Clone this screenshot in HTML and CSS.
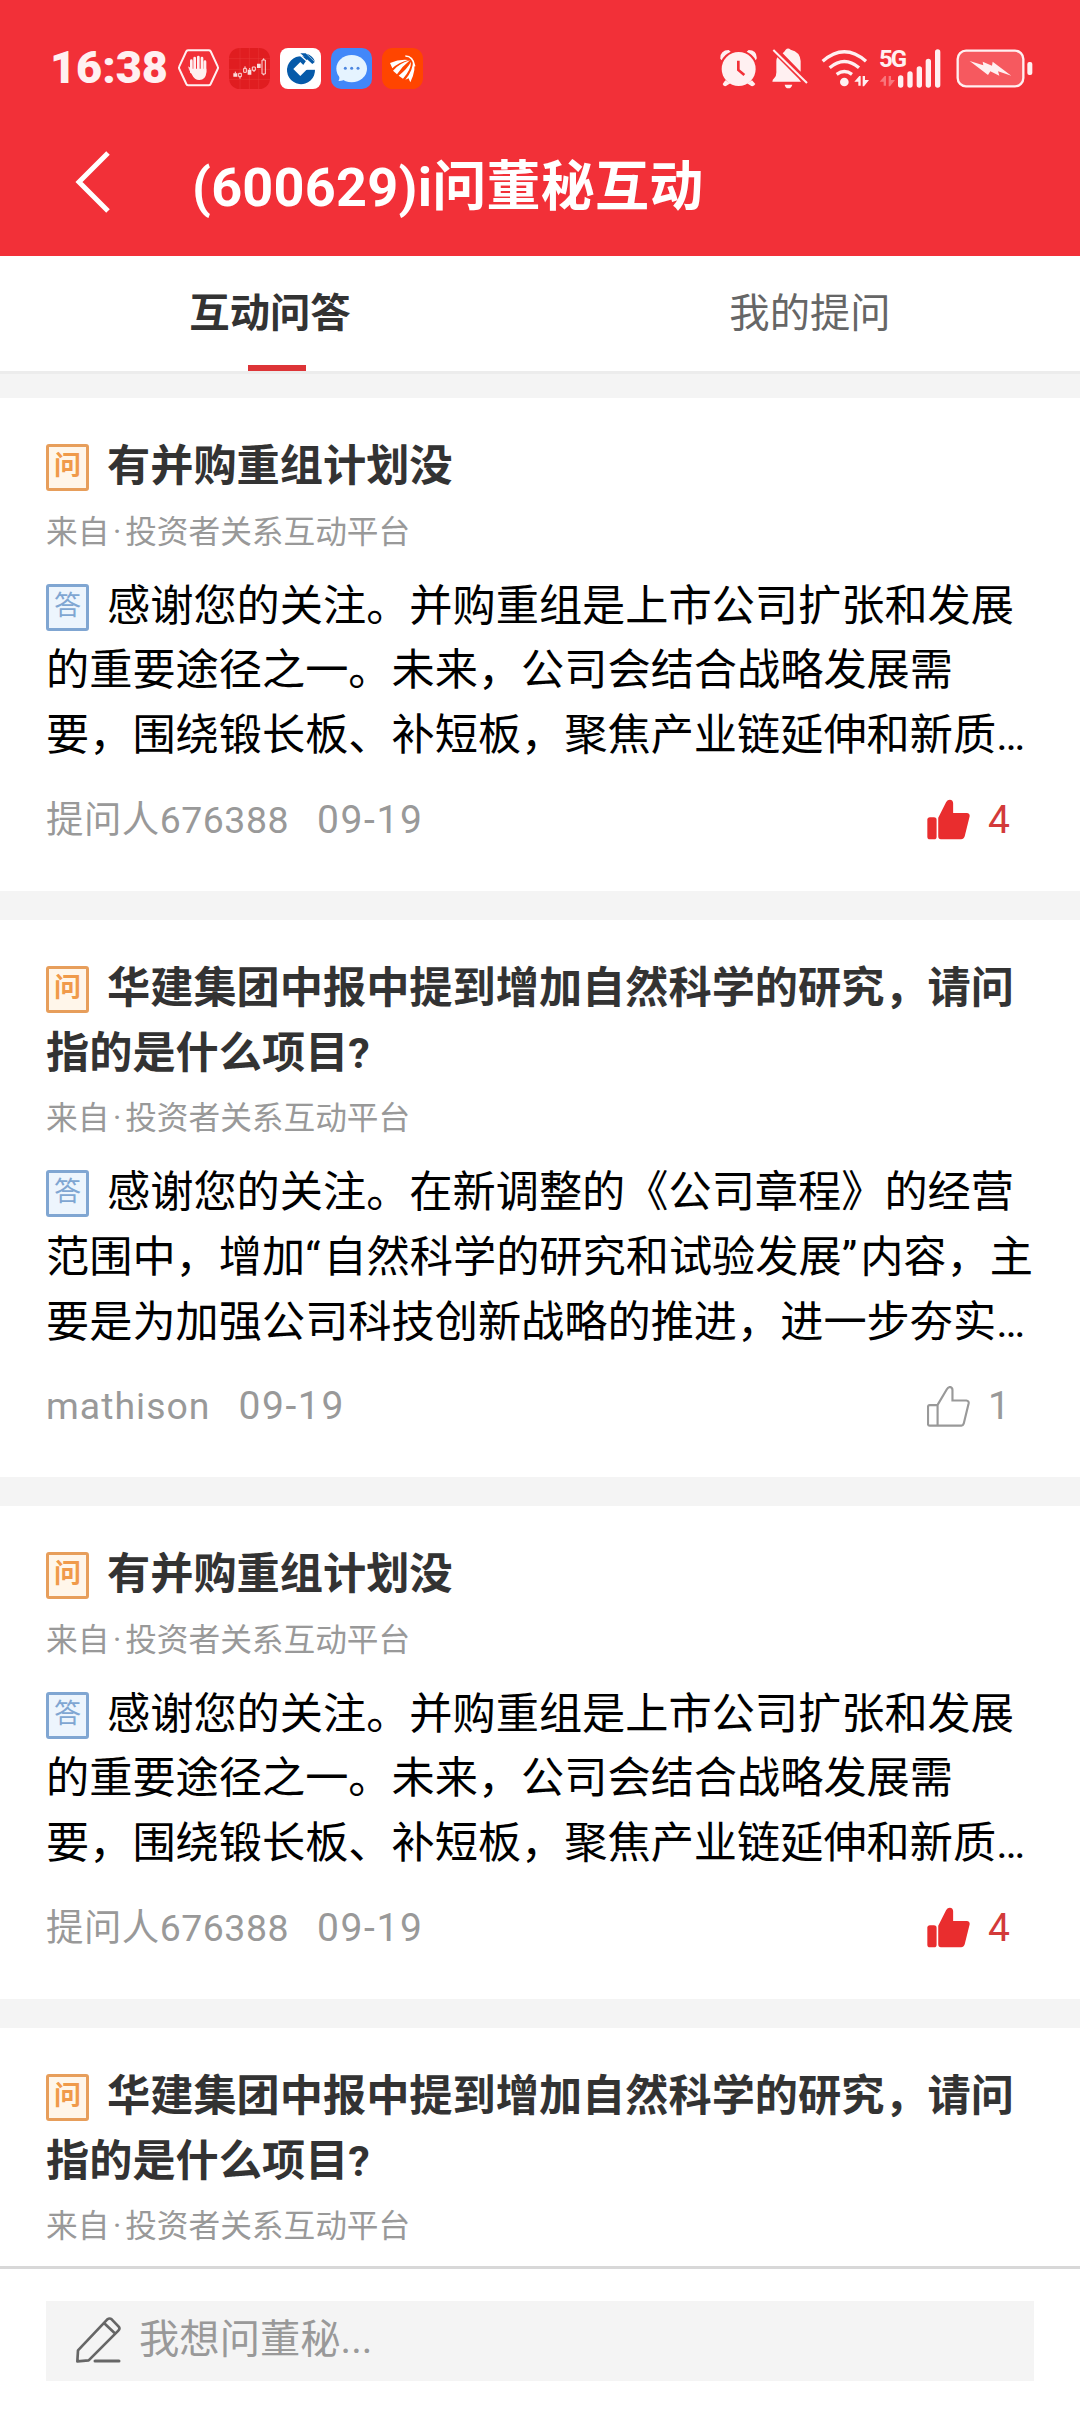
FILE: index.html
```html
<!DOCTYPE html>
<html lang="zh-CN">
<head>
  <title>i问董秘互动</title>
  <meta charset="UTF-8">
  <link rel="stylesheet" href="styles.css">
</head>
<body>
  <svg class="symbols">
    <symbol id="thumb-fill" viewBox="0 0 130 122">
      <rect x="1" y="54" width="28" height="67" rx="8"/>
      <path d="M34 56L58 8Q62 1 69 1Q79 2 79 12V41H120Q130 42 129 51L114 112Q111 121 103 121H42Q34 121 34 112Z"/>
    </symbol>
    <symbol id="thumb-line" viewBox="0 0 130 124">
      <path d="M32 57L60 10Q64 3 70 3Q77 5 77 12V44H119Q127 45 126 52L111 114Q109 120 104 120H8Q3 120 3 115V63Q3 58 8 58H32V120" fill="none" stroke="currentColor" stroke-width="6.5"/>
    </symbol>
  </svg>
  <div class="page">
    <div class="header">
      <div class="status-bar">
        <div class="status-left">
          <span class="clock">16:38</span>
          <svg width="41" height="38" viewBox="444 59 123 114">
            <path d="M475 63H536Q540 63 542 66L563 111Q565 115 563 119L542 164Q540 168 536 168H475Q471 168 469 164L448 119Q446 115 448 111L469 66Q471 63 475 63Z" fill="none" stroke="#fff0f1" stroke-width="6"/>
            <path d="M484 94V128M494 86V122M505 83V122M516 86V122M525 97V128" fill="none" stroke="#fff0f1" stroke-width="8" stroke-linecap="round"/>
            <path d="M480 122L475 114Q473 111 476 112L486 118H529V130Q527 151 508 152Q493 152 487 138L474 115Z" fill="#fff0f1"/>
          </svg>
          <svg width="41" height="41" viewBox="597 51 123 123">
            <rect x="597" y="51" width="123" height="123" rx="32" fill="#e01d20"/>
            <path d="M630 51V174M658 51V174M686 51V174M597 83H720M597 115H720M597 145H720" stroke="#ea3a3b" stroke-width="1.5"/>
            <path d="M610 127H622V137H610ZM653 116H664V131H653ZM681 98H692V111H681Z" fill="#fbdedd"/>
            <path d="M626 127H634V137H626ZM641 112H649V124H641ZM667 108H676V118H667ZM696 87H706V129H696ZM616 122V127M630 137V143M645 106V112M659 111V116M672 118V123M701 82V87M701 129V133" fill="none" stroke="#fbdedd" stroke-width="3"/>
          </svg>
          <svg width="41" height="41" viewBox="750 54 123 123">
            <rect x="750" y="54" width="123" height="123" rx="24" fill="#fff"/>
            <path d="M834 84A42 42 0 1 0 855 118H811Z" fill="#065aa9"/>
            <path d="M811 96L832 117L811 138L790 117Z" fill="#fff"/>
            <path d="M811 70H827L854 96L847 102Z" fill="#065aa9"/>
            <path d="M830 71Q849 77 855 95Z" fill="#065aa9"/>
            <path d="M809 74L846 107M826 117H860" stroke="#fff" stroke-width="4"/>
          </svg>
          <svg width="41" height="41" viewBox="903 54 123 123">
            <rect x="903" y="54" width="123" height="123" rx="30" fill="#4287f9"/>
            <ellipse cx="965" cy="116" rx="46" ry="41" fill="#e5f3ff"/>
            <path d="M927 134Q930 148 925 153Q938 154 944 148Z" fill="#e5f3ff"/>
            <circle cx="946" cy="115" r="4.5" fill="#4c86e0"/>
            <circle cx="965" cy="115" r="4.5" fill="#4c86e0"/>
            <circle cx="984" cy="115" r="4.5" fill="#4c86e0"/>
          </svg>
          <svg width="41" height="41" viewBox="1056 51 123 123">
            <rect x="1056" y="51" width="123" height="123" rx="32" fill="#ff4500"/>
            <path d="M1080 96Q1108 84 1135 87Q1106 94 1087 112ZM1089 119Q1108 97 1140 88Q1118 105 1101 130ZM1106 134Q1133 112 1143 92Q1144 114 1119 143ZM1126 146Q1150 118 1149 88Q1161 112 1141 154Q1138 149 1136 142Z" fill="#fff"/>
            <path d="M1126 75Q1149 75 1154 106" fill="none" stroke="#fff" stroke-width="5"/>
          </svg>
        </div>
        <div class="status-right">
          <svg width="37" height="38" viewBox="66 59 111 114">
            <circle cx="122" cy="119" r="51" fill="#fff0f1"/>
            <path d="M67 88Q66 63 92 62L98 67Q78 76 71 93ZM176 88Q178 63 152 62L146 67Q166 76 173 93ZM82 153L74 164Q76 172 84 170L97 162ZM162 153L172 164Q168 172 160 170L147 162Z" fill="#fff0f1"/>
            <path d="M121 94V122L139 137" fill="none" stroke="#f23038" stroke-width="8"/>
          </svg>
          <svg class="bell" width="36" height="41" viewBox="221 56 108 123">
            <path d="M262 61Q269 54 277 61Q305 67 307 95V127L253 72L259 66ZM234 95Q234 89 237 84L301 148L308 157H222Q222 151 228 146Q235 139 234 125ZM259 166H282Q279 177 270 177Q261 177 259 166Z" fill="#fff0f1"/>
            <path d="M225 62L326 161" stroke="#fff0f1" stroke-width="6"/>
          </svg>
          <svg class="wifi" width="48" height="38" viewBox="368 54 144 114">
            <path d="M373 91Q438 34 503 91M394 110Q438 73 482 110M415 130Q438 113 461 130" fill="none" stroke="#fff0f1" stroke-width="10"/>
            <circle cx="438" cy="153" r="13" fill="#fff0f1"/>
            <path d="M468 152L483 135H487V164H480V152ZM512 147L497 166H493V135H500V147Z" fill="#fff0f1"/>
          </svg>
          <div class="signal">
            <span class="net">5G</span>
            <svg width="62" height="39" viewBox="542 54 186 117">
              <path d="M544 152L559 135H563V164H556V152ZM590 147L575 166H571V135H578V147Z" fill="#f8767c"/>
              <path d="M607 141V162M635 129V162M663 114V162M690 91V162M718 63V162" stroke="#fff0f1" stroke-width="16" stroke-linecap="round"/>
            </svg>
          </div>
          <svg class="battery" width="77" height="39" viewBox="770 54 231 117">
            <rect x="775" y="59" width="197" height="107" rx="25" fill="#f6595f" stroke="#fff0f1" stroke-width="7"/>
            <path d="M811 90L852 103L850 92L878 104L880 92L936 134L896 121L900 134L873 121L866 132Z" fill="#fff0f1"/>
            <rect x="984" y="93" width="15" height="39" rx="6" fill="#fff0f1"/>
          </svg>
        </div>
      </div>
      <div class="nav">
        <svg class="back" width="36" height="64" viewBox="0 0 36 64">
          <path d="M33 3L4 32L33 61" fill="none" stroke="#fff" stroke-width="5"/>
        </svg>
        <h1>(600629)i问董秘互动</h1>
      </div>
    </div>

    <div class="tabs">
      <div class="tab active">互动问答</div>
      <div class="tab">我的提问</div>
    </div>

    <div class="list">
      <div class="card">
        <h2><span class="tag ask">问</span>有并购重组计划没</h2>
        <p class="source">来自<span class="dot">·</span>投资者关系互动平台</p>
        <p class="answer"><span class="tag reply">答</span>感谢您的关注。并购重组是上市公司扩张和发展<br>的重要途径之一。未来，公司会结合战略发展需<br>要，围绕锻长板、补短板，聚焦产业链延伸和新质…</p>
        <div class="meta">
          <span class="name">提问人676388</span><span class="date">09-19</span>
          <div class="like liked"><svg width="43" height="41"><use href="#thumb-fill"/></svg><span>4</span></div>
        </div>
      </div>

      <div class="card">
        <h2><span class="tag ask">问</span>华建集团中报中提到增加自然科学的研究，请问<br>指的是什么项目?</h2>
        <p class="source">来自<span class="dot">·</span>投资者关系互动平台</p>
        <p class="answer"><span class="tag reply">答</span>感谢您的关注。在新调整的《公司章程》的经营<br>范围中，增加<span class="quote">“</span>自然科学的研究和试验发展<span class="quote">”</span>内容，主<br>要是为加强公司科技创新战略的推进，进一步夯实…</p>
        <div class="meta">
          <span class="name latin">mathison</span><span class="date">09-19</span>
          <div class="like"><svg width="43" height="41"><use href="#thumb-line"/></svg><span>1</span></div>
        </div>
      </div>

      <div class="card">
        <h2><span class="tag ask">问</span>有并购重组计划没</h2>
        <p class="source">来自<span class="dot">·</span>投资者关系互动平台</p>
        <p class="answer"><span class="tag reply">答</span>感谢您的关注。并购重组是上市公司扩张和发展<br>的重要途径之一。未来，公司会结合战略发展需<br>要，围绕锻长板、补短板，聚焦产业链延伸和新质…</p>
        <div class="meta">
          <span class="name">提问人676388</span><span class="date">09-19</span>
          <div class="like liked"><svg width="43" height="41"><use href="#thumb-fill"/></svg><span>4</span></div>
        </div>
      </div>

      <div class="card">
        <h2><span class="tag ask">问</span>华建集团中报中提到增加自然科学的研究，请问<br>指的是什么项目?</h2>
        <p class="source">来自<span class="dot">·</span>投资者关系互动平台</p>
      </div>
    </div>

    <div class="footer">
      <div class="ask-box">
        <svg width="45" height="46" viewBox="0 0 135 138">
          <path d="M4 133L6 100L94 7Q101 2 107 7L128 29Q133 35 127 41L38 130ZM84 18L118 50" fill="none" stroke="#666" stroke-width="8" stroke-linejoin="round"/>
          <path d="M57 132H129" stroke="#666" stroke-width="9" stroke-linecap="round"/>
        </svg>
        <span>我想问董秘...</span>
      </div>
    </div>
  </div>
</body>
</html>
```
FILE: styles.css
```css
* {
  box-sizing: border-box;
}
body {
  margin: 0;
  font-family: Roboto, "Noto Sans CJK SC", sans-serif;
  background-color: #f4f4f4;
  text-spacing-trim: space-all;
}
h1, h2, p {
  margin: 0;
}
svg {
  display: block;
  flex: none;
}
.symbols {
  display: none;
}
.page {
  display: flex;
  flex-direction: column;
  width: 1080px;
  height: 2412px;
  overflow: hidden;
}

/* Header */
.header {
  flex: none;
  height: 256px;
  background-color: #f23038;
  color: white;
}
.status-bar {
  display: flex;
  justify-content: space-between;
  align-items: center;
  height: 116px;
  padding: 20px 47px 0 50px;
}
.status-left, .status-right {
  display: flex;
  align-items: center;
}
.status-left {
  gap: 10px;
}
.clock {
  width: 118px;
  font-size: 45px;
  font-weight: 900;
  line-height: 48px;
  color: #fff0f1;
}
.bell {
  margin-left: 15px;
}
.wifi {
  margin-left: 13px;
}
.signal {
  position: relative;
  margin-left: 10px;
}
.net {
  position: absolute;
  top: -2px;
  left: 0;
  font-size: 24px;
  font-weight: 700;
  line-height: 24px;
  letter-spacing: -2px;
  color: #fff0f1;
}
.battery {
  margin-left: 15px;
}
.nav {
  display: flex;
  align-items: center;
  height: 140px;
  padding-left: 75px;
}
.back {
  margin-top: -8px;
}
.nav h1 {
  margin-top: 3px;
  margin-left: 81px;
  font-size: 54px;
  font-weight: 700;
  line-height: 80px;
  letter-spacing: 0.25px;
}

/* Tabs */
.tabs {
  display: flex;
  flex: none;
  height: 118px;
  background-color: white;
  border-bottom: 3px solid #ececec;
}
.tab {
  flex: 1;
  position: relative;
  text-align: center;
  font-size: 40.32px;
  line-height: 115px;
  color: #666;
}
.tab.active {
  font-weight: 700;
  color: #333;
}
.tab.active::after {
  content: "";
  position: absolute;
  left: 248px;
  bottom: 0;
  width: 58px;
  height: 6px;
  background-color: #dd3437;
}

/* Questions */
.list {
  flex: 1;
  min-height: 0;
  padding-top: 24px;
  overflow: hidden;
}
.card {
  height: 493px;
  padding: 37px 46px 0;
  margin-bottom: 29px;
  background-color: white;
  white-space: nowrap;
}
.card:nth-child(even) {
  height: 557px;
}
.card h2 {
  font-size: 43.2px;
  font-weight: 700;
  line-height: 64.5px;
  color: #333;
}
.tag {
  display: inline-block;
  width: 43px;
  height: 47px;
  margin-right: 18px;
  border: 3px solid;
  border-radius: 3px;
  font-size: 27px;
  line-height: 38px;
  text-align: center;
  vertical-align: 6px;
}
.ask {
  border-color: #e79e5b;
  background-color: #fff6ea;
  color: #f09a4a;
}
.reply {
  border-color: #80a6d2;
  background-color: #edf5fd;
  color: #80a6d2;
}
.source {
  margin-top: 9px;
  font-size: 31.68px;
  line-height: 48px;
  color: #999;
}
.dot {
  display: inline-block;
  width: 0.5em;
  text-align: center;
}
.answer {
  margin-top: 18px;
  font-size: 43.2px;
  line-height: 64.8px;
  color: black;
}
.quote {
  letter-spacing: 3px;
}
.meta {
  display: flex;
  align-items: center;
  height: 56px;
  margin-top: 23px;
  font-size: 37.44px;
  line-height: 58px;
  color: #999;
}
.name {
  margin-right: 28px;
  letter-spacing: 0.5px;
}
.latin {
  letter-spacing: 1px;
}
.date {
  font-size: 39px;
  letter-spacing: 1.6px;
}
.like {
  display: flex;
  align-items: center;
  gap: 18px;
  margin-left: auto;
  margin-right: 24px;
}
.like span {
  font-size: 39px;
}
.liked {
  fill: #e92d2e;
  color: #d33a3a;
}

/* Footer */
.footer {
  flex: none;
  height: 146px;
  padding: 32px 46px 31px;
  border-top: 3px solid #d8d8d8;
  background-color: white;
}
.ask-box {
  display: flex;
  align-items: center;
  gap: 18px;
  height: 80px;
  padding: 0 0 3px 30px;
  background-color: #f4f4f4;
  font-size: 40.32px;
  line-height: 76px;
  color: #999;
}
```
